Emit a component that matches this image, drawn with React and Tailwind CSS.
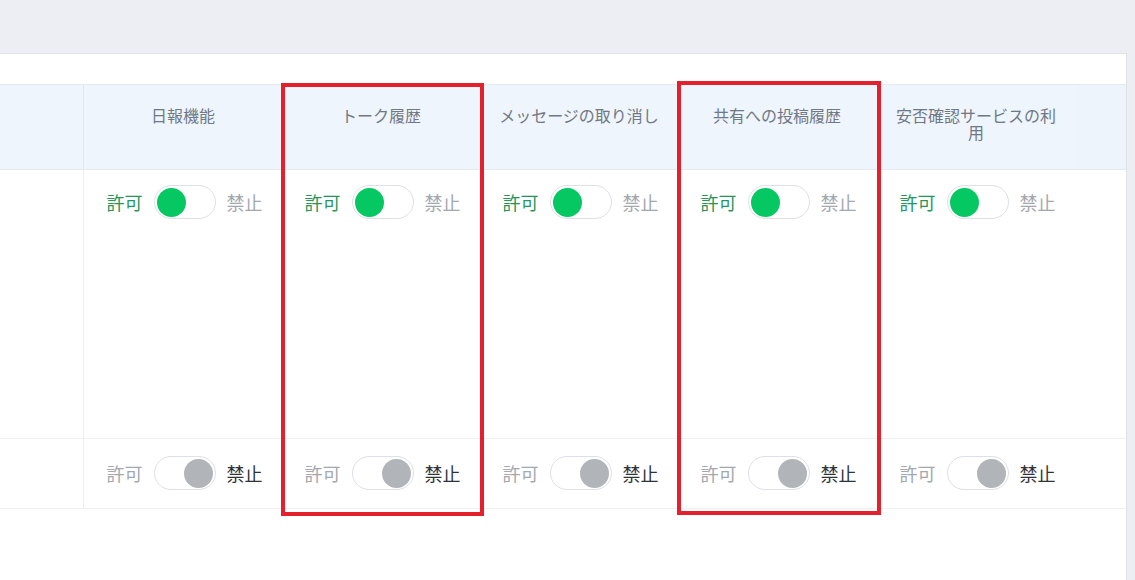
import { useState } from 'react';

const columns = [
  { key: 'report', label: '日報機能' },
  { key: 'talk', label: 'トーク履歴' },
  { key: 'recall', label: 'メッセージの取り消し' },
  { key: 'share', label: '共有への投稿履歴' },
  { key: 'safety', label: '安否確認サービスの利用' },
];

const initialRows = [
  { id: 1, height: 'h-[269px]', values: { report: true, talk: true, recall: true, share: true, safety: true } },
  { id: 2, height: 'h-[70px]', values: { report: false, talk: false, recall: false, share: false, safety: false } },
];

function PermissionToggle({ on, onChange }) {
  return (
    <div className="flex items-center justify-center gap-[11px] text-[18px] leading-none">
      <span className={on ? 'text-[#23975a]' : 'text-[#a3a7ae]'}>許可</span>
      <button
        type="button"
        onClick={onChange}
        className={`flex h-[34px] w-[62px] items-center rounded-full border border-[#dde0e6] bg-white px-[2px] ${
          on ? 'justify-start' : 'justify-end'
        }`}
      >
        <span className={`h-[29px] w-[29px] rounded-full ${on ? 'bg-[#06c863]' : 'bg-[#b1b4b9]'}`} />
      </button>
      <span className={on ? 'text-[#a3a7ae]' : 'text-[#2f3337]'}>禁止</span>
    </div>
  );
}

export default function App() {
  const [rows, setRows] = useState(initialRows);

  const toggle = (id, key) => {
    setRows((prev) =>
      prev.map((r) => (r.id === id ? { ...r, values: { ...r.values, [key]: !r.values[key] } } : r))
    );
  };

  return (
    <div
      className="flex h-[580px] w-[1135px] flex-col overflow-hidden bg-[#eceef3]"
      style={{ fontFamily: '"Noto Sans CJK JP", "Noto Sans", sans-serif' }}
    >
      <div className="h-[53px] shrink-0" />

      <div className="relative mr-[8px] flex-1 border-t border-r border-[#dfe2e7] bg-white">
        <div className="h-[30px]" />

        {/* header */}
        <div className="flex h-[86px] border-y border-[#e6e9ee] bg-[#eef5fd]">
          <div className="w-[84px] shrink-0 border-r border-[#e3e8ef]" />
          {columns.map((c, i) => (
            <div
              key={c.key}
              className={`shrink-0 px-[16px] pt-[22px] text-center text-[16px] leading-[17px] text-[#717884] ${
                i === columns.length - 1 ? 'w-[200px]' : 'w-[198px]'
              }`}
            >
              {c.label}
            </div>
          ))}
          <div className="flex-1 bg-[#edf4fc]" />
        </div>

        {/* rows */}
        {rows.map((row) => (
          <div key={row.id} className={`flex border-b border-[#eef0f3] ${row.height}`}>
            <div className="w-[84px] shrink-0 border-r border-[#eceef1]" />
            {columns.map((c, i) => (
              <div
                key={c.key}
                className={`shrink-0 pl-[3px] ${i === columns.length - 1 ? 'w-[200px]' : 'w-[198px]'} ${
                  row.id === 2 ? 'pt-[17px]' : 'pt-[15px]'
                }`}
              >
                <PermissionToggle on={row.values[c.key]} onChange={() => toggle(row.id, c.key)} />
              </div>
            ))}
            <div className="flex-1" />
          </div>
        ))}

        {/* highlight frames */}
        <div className="pointer-events-none absolute top-[29px] left-[281px] h-[433px] w-[203px] border-[4px] border-[#e3202b]" />
        <div className="pointer-events-none absolute top-[27px] left-[677px] h-[434px] w-[204px] border-[4px] border-[#e3202b]" />
      </div>
    </div>
  );
}
